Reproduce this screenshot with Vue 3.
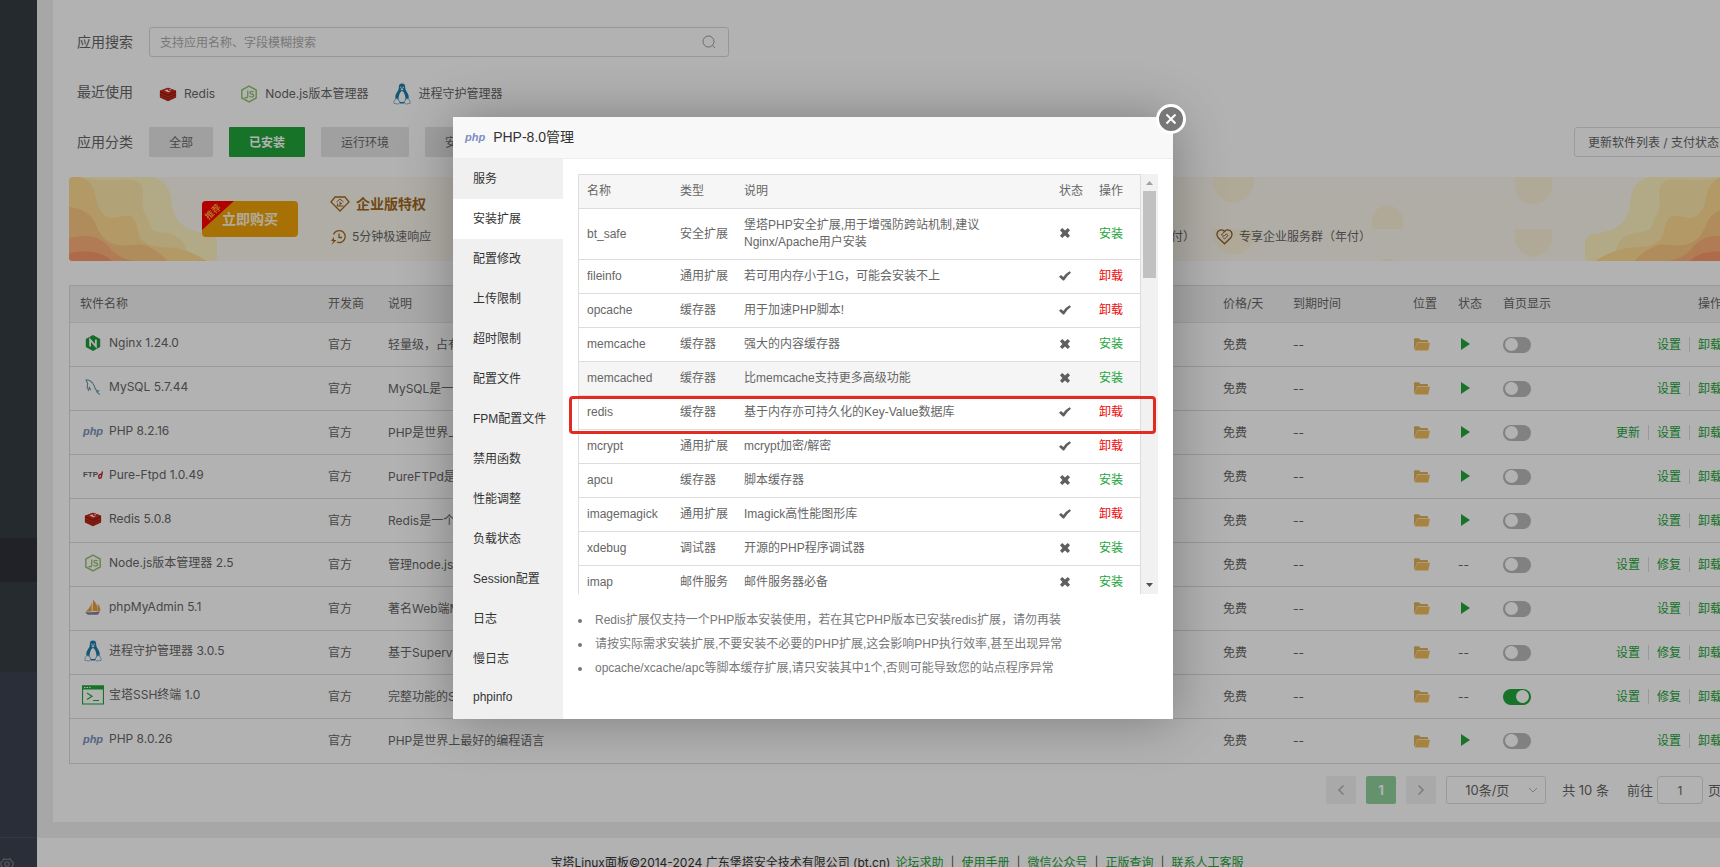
<script setup>
import { ref } from 'vue'

const recent = [
  { icon: 'redis', name: 'Redis' },
  { icon: 'node', name: 'Node.js版本管理器' },
  { icon: 'linux', name: '进程守护管理器' },
]
const categories = ['全部', '已安装', '运行环境', '安全应用']
const activeCategory = ref('已安装')
const keyword = ref('')
const pageNo = ref('1')

const software = ref([
  { icon: 'nginx', name: 'Nginx 1.24.0', desc: '轻量级，占有内存少，并发能力强', run: true, home: false, ops: ['设置', '卸载'] },
  { icon: 'mysql', name: 'MySQL 5.7.44', desc: 'MySQL是一种关系数据库管理系统', run: true, home: false, ops: ['设置', '卸载'] },
  { icon: 'php', name: 'PHP 8.2.16', desc: 'PHP是世界上最好的编程语言', run: true, home: false, ops: ['更新', '设置', '卸载'] },
  { icon: 'ftp', name: 'Pure-Ftpd 1.0.49', desc: 'PureFTPd是一款专注于程序健壮的软件', run: true, home: false, ops: ['设置', '卸载'] },
  { icon: 'redis', name: 'Redis 5.0.8', desc: 'Redis是一个高性能的数据库', run: true, home: false, ops: ['设置', '卸载'] },
  { icon: 'node', name: 'Node.js版本管理器 2.5', desc: '管理node.js版本', run: false, home: false, ops: ['设置', '修复', '卸载'] },
  { icon: 'pma', name: 'phpMyAdmin 5.1', desc: '著名Web端MySQL管理工具', run: true, home: false, ops: ['设置', '卸载'] },
  { icon: 'linux', name: '进程守护管理器 3.0.5', desc: '基于Supervisor的进程管理', run: false, home: false, ops: ['设置', '修复', '卸载'] },
  { icon: 'ssh', name: '宝塔SSH终端 1.0', desc: '完整功能的SSH客户端', run: false, home: true, ops: ['设置', '修复', '卸载'] },
  { icon: 'php', name: 'PHP 8.0.26', desc: 'PHP是世界上最好的编程语言', run: true, home: false, ops: ['设置', '卸载'] },
])

const tabs = ['服务', '安装扩展', '配置修改', '上传限制', '超时限制', '配置文件', 'FPM配置文件', '禁用函数', '性能调整', '负载状态', 'Session配置', '日志', '慢日志', 'phpinfo']
const activeTab = ref('安装扩展')

const extensions = [
  { name: 'bt_safe', type: '安全扩展', desc: '堡塔PHP安全扩展,用于增强防跨站机制,建议Nginx/Apache用户安装', on: false },
  { name: 'fileinfo', type: '通用扩展', desc: '若可用内存小于1G，可能会安装不上', on: true },
  { name: 'opcache', type: '缓存器', desc: '用于加速PHP脚本!', on: true },
  { name: 'memcache', type: '缓存器', desc: '强大的内容缓存器', on: false },
  { name: 'memcached', type: '缓存器', desc: '比memcache支持更多高级功能', on: false, hover: true },
  { name: 'redis', type: '缓存器', desc: '基于内存亦可持久化的Key-Value数据库', on: true },
  { name: 'mcrypt', type: '通用扩展', desc: 'mcrypt加密/解密', on: true },
  { name: 'apcu', type: '缓存器', desc: '脚本缓存器', on: false },
  { name: 'imagemagick', type: '通用扩展', desc: 'Imagick高性能图形库', on: true },
  { name: 'xdebug', type: '调试器', desc: '开源的PHP程序调试器', on: false },
  { name: 'imap', type: '邮件服务', desc: '邮件服务器必备', on: false },
]
const notes = [
  'Redis扩展仅支持一个PHP版本安装使用，若在其它PHP版本已安装redis扩展，请勿再装',
  '请按实际需求安装扩展,不要安装不必要的PHP扩展,这会影响PHP执行效率,甚至出现异常',
  'opcache/xcache/apc等脚本缓存扩展,请只安装其中1个,否则可能导致您的站点程序异常',
]
const footLinks = ['论坛求助', '使用手册', '微信公众号', '正版查询', '联系人工客服']
</script>

<template>
  <div class="app">
    <svg class="defs" aria-hidden="true">
      <symbol id="i-redis" viewBox="0 0 20 20">
        <path d="M1 6.5 10 3l9 3.5v7.5L10 18 1 14z" fill="#a41e11" />
        <path d="M1 6.5 10 3l9 3.5-9 4z" fill="#c92a20" />
        <path d="M1 9.2l9 4 9-4M1 12l9 4 9-4" fill="none" stroke="#cc3a30" />
        <path d="M6 5.7l3.5-.8 1 1.8 2.6.2-2.8 1.2zM11 4.4l3 1-1.8.8z" fill="#fff" />
      </symbol>
      <symbol id="i-node" viewBox="0 0 20 20">
        <path d="M10 1.2 18 5.6v8.8L10 18.8 2 14.4V5.6z" fill="none" stroke="#96c272" stroke-width="1.6" />
        <path d="M8.6 6v6.4q0 1.8-1.6 1.8-1.4 0-1.8-1M15 8q-.6-1-2.2-1-1.8 0-1.8 1.5 0 1.2 2 1.5 2.2.3 2.2 1.8 0 1.6-2.2 1.6-1.8 0-2.4-1.2" fill="none" stroke="#96c272" stroke-width="1.5" />
      </symbol>
      <symbol id="i-linux" viewBox="0 0 20 24">
        <path d="M6.500 5q-.4-4.800 3.500-4.800T13.500 5q.1 3 2.400 5.500Q19 15 16 20l-4 2.500H8L4 20Q1 15 4.100 10.500 6.500 8 6.500 5z" fill="#1c7dab" />
        <path d="M10 8.500q-2 1.500-3 4-1.600 5 0 7.500 3 2 6 0 1.600-2.500 0-7.500Q12 10 10 8.500z" fill="#fff" />
        <path d="M8.200 6.500 10 5.600l1.800.9L10 8z" fill="#fff" />
        <circle cx="8.700" cy="4.500" r=".7" fill="#fff" /><circle cx="11.300" cy="4.500" r=".7" fill="#fff" />
        <path d="M4.500 17q2 1.500 3.200 4-.8 2.500-3 2.200-1.500-.8-3.700-.8-.5-1 .3-2-.3-1.500 1-2 .6-1.200 2.200-1.400zM15.500 17q-2 1.500-3.200 4 .8 2.500 3 2.200 1.500-.8 3.700-.8.500-1-.3-2 .3-1.500-1-2-.6-1.200-2.200-1.400z" fill="#fff" stroke="#5f9ab5" stroke-width=".8" />
      </symbol>
      <symbol id="i-nginx" viewBox="0 0 20 20">
        <path d="M10 1l8 4.500v9L10 19l-8-4.500v-9z" fill="#1f9a3c" />
        <path d="M6.800 14V6.300l6.400 7.400V6" fill="none" stroke="#fff" stroke-width="2" />
      </symbol>
      <symbol id="i-mysql" viewBox="0 0 20 20">
        <path d="M2 2q4-.5 7.500 3.500 2.500 3.500 3 6.500.8 2 3.500 2.500l-1.800.8q1.500 1.400 3.300 3.200M2 2l2 3.500q0 3-.5 5L5 13.500l1-3 1.500 3" fill="none" stroke="#6b97a6" stroke-width="1.200" />
      </symbol>
      <symbol id="i-pma" viewBox="0 0 20 20">
        <path d="M8.500 2q.8 7-6.500 13h6.500zM10 2q5.500 5 5 12.500H9.500zM15 6.500q3.500 3 3 8h-2.500z" fill="#e8a03c" />
        <path d="M1.500 15.500q8 1.200 16-.8-.6 3.500-3 3.800H4.500q-2-.8-3-3z" fill="#8481a0" />
      </symbol>
      <symbol id="i-ssh" viewBox="0 0 22 20">
        <path d="M.5 1h21v18H.5z" fill="none" stroke="#20a53a" stroke-width="1.200" />
        <path d="M0 .5h22v4H0z" fill="#20a53a" />
        <path d="M2 2.500h1.500M4.500 2.500H6M7 2.500h1.500" stroke="#fff" stroke-width="1" />
        <path d="M5 8l5 3.300-5 3.300M11 15.500h6" fill="none" stroke="#20a53a" stroke-width="1.200" />
      </symbol>
      <symbol id="i-folder" viewBox="0 0 16 13">
        <path d="M0 1q0-.8.800-.8h4.200L6.500 2H13q1 0 1 1v1.200H3L.8 11.500Q0 11 0 10.500z" fill="#dfb25c" />
        <path d="M3 4.800H16l-1.800 7.700H.8z" fill="#f0bc5b" />
      </symbol>
      <symbol id="i-check" viewBox="0 0 12 10">
        <path d="M0 5.800 2 4l2.300 1.900Q6.800 2.300 10.600.2l1.400 1.600Q8.200 4.500 5.300 9.300q-.8.600-1.600 0z" fill="#5f5f5f" />
      </symbol>
      <symbol id="i-cross" viewBox="0 0 10 10">
        <path d="M2.200 0 5 2.400 7.800 0 10 2.200 7.600 5 10 7.800 7.800 10 5 7.600 2.200 10 0 7.800 2.400 5 0 2.200z" fill="#5f5f5f" />
      </symbol>
      <symbol id="i-waves" viewBox="0 0 148 84">
        <path d="M0 0h81q15 1 20 16c3 10 0 16 8 27 8 12 22 12 32 14q7 3 7 8v15q0 4-4 4H0z" fill="#fff2c0" />
        <path d="M0 0h11c20 5 40 2 53 3q10 2 10 12c0 10-2 16 3 24 6 12 4 15 14 16 12 1 16 3 23 10q5 8 3 19H0z" fill="#ffe9ab" />
        <path d="M0 0h11q13 4 15 17c2 12 6 22 16 24 12-1 20-6 24 3 4 6 1 14 8 20 10 8 20 5 32 7 14 3 20 6 32 13H0z" fill="#ffdc92" />
        <path d="M0 30q18 2 25 14c5 10 8 20 20 23 16 4 24-3 35 3q10 4 18 14H0z" fill="#fdc784" />
        <path d="M0 61q18-4 28 0 10 5 14 12 8 8 22 11H0z" fill="#fdb07a" />
        <path d="M0 76q16-3 29 0 8 2 14 8H0z" fill="#f89a6c" />
      </symbol>
    </svg>

    <aside class="side">
      <div class="side-top"></div>
      <div class="side-current"></div>
      <div class="side-mid"></div>
      <div class="side-rest"></div>
      <div class="side-foot">
        <svg width="14" height="14" viewBox="0 0 16 16" fill="none" stroke="#73777f" stroke-width="1.500"><path d="M4.500 2 6 2.800h4L11.500 2 13 4.500l2 2v3l-2 2L11.500 14h-7L3 11.500l-2-2v-3l2-2z" /><circle cx="8" cy="8" r="2.500" /></svg>
      </div>
    </aside>

    <div class="page">
      <main class="panel">
        <div class="frow">
          <label class="flabel" for="search">应用搜索</label>
          <div class="search">
            <input id="search" v-model="keyword" type="text" placeholder="支持应用名称、字段模糊搜索" />
            <svg width="14" height="14" viewBox="0 0 14 14" fill="none" stroke="#999"><circle cx="6.500" cy="6.500" r="5.500" /><path d="M10.500 10.500 13 13" /></svg>
          </div>
        </div>
        <div class="frow">
          <span class="flabel">最近使用</span>
          <div class="recent">
            <a v-for="r in recent" :key="r.name" href="#"><svg class="ricon" :class="r.icon"><use :href="'#i-' + r.icon" /></svg>{{ r.name }}</a>
          </div>
        </div>
        <div class="frow">
          <span class="flabel">应用分类</span>
          <div class="cats">
            <button v-for="c in categories" :key="c" type="button" :class="{ on: c === activeCategory }" @click="activeCategory = c">{{ c }}</button>
          </div>
          <button class="refresh" type="button">更新软件列表 / 支付状态</button>
        </div>

        <section class="banner">
          <svg class="dots" width="385" height="84" viewBox="0 0 385 84">
            <g fill="#fdf3da">
              <path d="M13 0h41v5a20.500 20.500 0 0 1-41 0z" />
              <path d="M172 52V44a15.500 15.500 0 0 1 31 0v8z" />
              <path d="M315 0h37v9a18.500 18.500 0 0 1-37 0z" />
              <path d="M13 52h41v5a20.500 20.500 0 0 1-41 0z" />
              <path d="M315 52h37v9a18.500 18.500 0 0 1-37 0z" />
              <path d="M180 84q8-5 15 0z" />
            </g>
          </svg>
          <svg class="waves left"><use href="#i-waves" /></svg>
          <svg class="waves right"><use href="#i-waves" /></svg>
          <button class="buy" type="button"><span class="ribbon"><i>推荐</i></span>立即购买</button>
          <div class="perks">
            <h3>
              <svg width="20" height="18" viewBox="0 0 20 18" fill="none" stroke="#a0681d" stroke-width="1.300"><path d="M5 2h10l4 5-9 9L1 7z" /><path d="M6.500 7 10 4l3.500 3M10 6.500V11M7.500 8.500V11M10 8.500h2M6.500 11h7" stroke-width="1" /></svg>
              企业版特权
            </h3>
            <ul>
              <li>
                <svg width="16" height="17" viewBox="0 0 16 17" fill="none" stroke="#a0681d" stroke-width="1.300"><path d="M3.500 5.500a6 6 0 1 1 3.500 7.700M9 4.500v4h3" /><path d="M4 8 1 12h2.500L1.500 16 6.500 11H4z" fill="#a0681d" stroke="none" /></svg>
                5分钟极速响应
              </li>
              <li class="mid">（年付）</li>
              <li>
                <svg width="17" height="16" viewBox="0 0 17 16" fill="none" stroke="#8a6030" stroke-width="1.300"><path d="M8.500 14.800 2 8.500Q-.5 4 3 1.500 6.500 0 8.500 2.500 10.500 0 14 1.500 17.500 4 15 8.500z" /><path d="M8.500 2.500 5.500 6q1 2 3 .5L10.500 5l1.500 1.500-3.500 3.500-1.500-1.500" stroke-width="1" /></svg>
                专享企业服务群（年付）
              </li>
            </ul>
          </div>
        </section>

        <table class="soft">
          <colgroup><col class="c-name" /><col class="c-dev" /><col /><col class="c-price" /><col class="c-date" /><col class="c-sm" /><col class="c-sm" /><col class="c-home" /><col class="c-ops" /></colgroup>
          <thead>
            <tr><th>软件名称</th><th>开发商</th><th>说明</th><th>价格/天</th><th>到期时间</th><th>位置</th><th>状态</th><th>首页显示</th><th class="ops">操作</th></tr>
          </thead>
          <tbody>
            <tr v-for="s in software" :key="s.name">
              <td>
                <div class="sname">
                  <span class="sbox">
                    <i v-if="s.icon === 'php'" class="logo-php">php</i>
                    <template v-else-if="s.icon === 'ftp'"><b class="logo-ftp">FTP</b><svg width="5" height="8" viewBox="0 0 5 8"><path d="M4.500.5 3 7M3.500 3.300Q.7 3 .7 5.500t2.300 1.300" fill="none" stroke="#c2242b" stroke-width="1.400" /></svg></template>
                    <svg v-else :class="['sicon', s.icon]"><use :href="'#i-' + s.icon" /></svg>
                  </span>{{ s.name }}
                </div>
              </td>
              <td>官方</td>
              <td class="desc">{{ s.desc }}</td>
              <td>免费</td>
              <td>--</td>
              <td><svg class="folder"><use href="#i-folder" /></svg></td>
              <td><svg v-if="s.run" class="play" viewBox="0 0 9 12"><path d="M0 0l9 6-9 6z" fill="#20a53a" /></svg><template v-else>--</template></td>
              <td><input v-model="s.home" class="switch" type="checkbox" role="switch" :aria-label="s.name" /></td>
              <td class="ops"><a v-for="o in s.ops" :key="o" href="#">{{ o }}</a></td>
            </tr>
          </tbody>
        </table>

        <nav class="pager">
          <button type="button" aria-label="prev"><svg width="8" height="12" viewBox="0 0 8 12"><path d="M6.500 1.500 2 6l4.500 4.500" /></svg></button>
          <button type="button" class="cur">1</button>
          <button type="button" aria-label="next"><svg width="8" height="12" viewBox="0 0 8 12"><path d="M1.500 1.500 6 6l-4.500 4.500" /></svg></button>
          <span class="size">
            <select aria-label="size"><option>10条/页</option></select>
            <svg width="10" height="6" viewBox="0 0 10 6"><path d="M1 1l4 4 4-4" /></svg>
          </span>
          <span class="total">共 10 条</span>
          <label for="goto">前往</label>
          <input id="goto" v-model="pageNo" type="text" />
          <span>页</span>
        </nav>
      </main>
      <footer class="foot">
        <span>宝塔Linux面板©2014-2024 广东堡塔安全技术有限公司 (bt.cn)</span>
        <a v-for="l in footLinks" :key="l" href="#">{{ l }}</a>
      </footer>
    </div>

    <div class="mask"></div>

    <section class="modal" role="dialog">
      <header class="mhead">
        <i class="logo-php">php</i>
        <h2>PHP-8.0管理</h2>
      </header>
      <button class="close" type="button" aria-label="close"><svg width="12" height="12" viewBox="0 0 12 12"><path d="M1.500 1.500l9 9M10.500 1.500l-9 9" stroke="#fff" stroke-width="2" /></svg></button>
      <div class="mbody">
        <nav class="tabs">
          <button v-for="t in tabs" :key="t" type="button" :class="{ on: t === activeTab }" @click="activeTab = t">{{ t }}</button>
        </nav>
        <div class="content">
          <div class="scroller">
            <div class="view">
              <table class="ext">
                <colgroup><col class="e-name" /><col class="e-type" /><col /><col class="e-state" /><col class="e-op" /></colgroup>
                <thead><tr><th>名称</th><th>类型</th><th>说明</th><th>状态</th><th>操作</th></tr></thead>
                <tbody>
                  <tr v-for="e in extensions" :key="e.name" :class="{ hover: e.hover }">
                    <td>{{ e.name }}</td>
                    <td>{{ e.type }}</td>
                    <td><span class="edesc">{{ e.desc }}</span></td>
                    <td><svg v-if="e.on" class="check"><use href="#i-check" /></svg><svg v-else class="cross"><use href="#i-cross" /></svg></td>
                    <td><a href="#" :class="{ del: e.on }">{{ e.on ? '卸载' : '安装' }}</a></td>
                  </tr>
                </tbody>
              </table>
            </div>
            <div class="bar">
              <svg width="7" height="4" viewBox="0 0 7 4"><path d="M0 4 3.500 0 7 4z" fill="#a0a0a0" /></svg>
              <span class="thumb"></span>
              <svg class="down" width="7" height="4" viewBox="0 0 7 4"><path d="M0 0h7L3.500 4z" fill="#505050" /></svg>
            </div>
            <div class="mark"></div>
          </div>
          <ul class="notes">
            <li v-for="n in notes" :key="n">{{ n }}</li>
          </ul>
        </div>
      </div>
    </section>
  </div>
</template>

<style>
body {
  margin: 0;
}
</style>

<style scoped>
.app {
  position: relative;
  display: flex;
  height: 100vh;
  overflow: hidden;
  background: #f0f0f0;
  color: #666;
  font: 12px/20px Inter, "Noto Sans CJK SC", sans-serif;
}
.app *,
.app *::before,
.app *::after {
  box-sizing: border-box;
}
button,
input,
select {
  font-family: inherit;
  font-size: 12px;
  color: inherit;
  margin: 0;
}
a {
  color: inherit;
  text-decoration: none;
}
.defs {
  position: absolute;
  width: 0;
  height: 0;
}
.logo-php {
  color: #7a8fc0;
  font: italic bold 11px/20px "Liberation Sans", sans-serif;
}
.logo-ftp {
  color: #666;
  font: bold 8px/20px "Liberation Sans", sans-serif;
}

/* side menu */
.side {
  display: grid;
  flex: none;
  grid-template-rows: 538fr 44fr 90fr 165fr 30fr;
  width: 37px;
  background: #3d4351;
}
.side-top {
  background: #363d42;
}
.side-current {
  background: #2e3138;
}
.side-mid {
  background: #363e42;
}
.side-foot {
  min-height: 0;
  padding-top: 19px;
  border-top: 1px solid #4c515d;
  overflow: hidden;
}

/* page */
.page {
  flex: none;
  width: calc(100% + 8px);
}
.panel {
  margin: 0 16px;
  padding: 27px 16px 18px;
  background: #fff;
}
.frow {
  display: flex;
  align-items: center;
  height: 30px;
  margin-bottom: 20px;
  padding-left: 8px;
}
.flabel {
  width: 72px;
  font-size: 14px;
}
.search {
  display: flex;
  align-items: center;
  width: 580px;
  height: 30px;
  padding: 0 12px 0 10px;
  border: 1px solid #d8d8d8;
  border-radius: 3px;
}
.search input {
  flex: 1;
  padding: 0;
  border: 0;
  outline: 0;
  background: none;
}
.search input::placeholder {
  color: #acacac;
}
.recent {
  display: flex;
  gap: 25px;
  padding: 3px 0 0 10px;
}
.recent a {
  display: flex;
  align-items: center;
  gap: 7px;
}
.ricon {
  width: 18px;
  height: 18px;
}
.ricon.linux {
  height: 24px;
}
.cats {
  display: flex;
  gap: 16px;
}
.cats button {
  height: 30px;
  padding: 0 20px 2px;
  border: 0;
  border-radius: 1px;
  background: #e6e6e6;
}
.cats .on {
  background: #20a53a;
  color: #fff;
  font-weight: bold;
}
.refresh {
  height: 30px;
  margin-left: auto;
  padding: 0 13px 2px;
  border: 1px solid #dcdfe6;
  border-radius: 3px;
  background: #fff;
}

/* banner */
.banner {
  position: relative;
  display: flex;
  height: 84px;
  margin-bottom: 24px;
  border-radius: 4px;
  background: #fcf8ee;
  overflow: hidden;
}
.waves {
  position: absolute;
  top: 0;
  width: 148px;
  height: 84px;
}
.waves.left {
  left: 0;
}
.waves.right {
  right: 0;
  transform: scaleX(-1);
}
.dots {
  position: absolute;
  top: 0;
  right: 148px;
}
.buy {
  position: relative;
  width: 96px;
  height: 36px;
  margin: 24px 32px 0 133px;
  padding: 0 0 2px;
  border: 0;
  border-radius: 4px;
  background: #f0a20a;
  color: #fff4dc;
  font-size: 14px;
  font-weight: bold;
  overflow: hidden;
}
.ribbon {
  position: absolute;
  top: 0;
  left: 0;
  width: 32px;
  height: 29px;
  background: #f00;
  clip-path: polygon(0 0, 100% 0, 0 100%);
}
.ribbon i {
  position: absolute;
  top: 0;
  left: 0;
  width: 22px;
  color: #ffd34d;
  font: normal 9px/22px Inter, "Noto Sans CJK SC", sans-serif;
  transform: rotate(-43deg);
}
.perks {
  position: relative;
}
.perks h3 {
  display: flex;
  align-items: center;
  gap: 6px;
  margin: 17px 0 13px;
  color: #a0681d;
  font-size: 14px;
  line-height: 20px;
}
.perks ul {
  display: grid;
  grid-template-columns: 200px 1fr 155px;
  column-gap: 21px;
  width: 1041px;
  margin: 0;
  padding: 0;
  list-style: none;
}
.perks li {
  display: flex;
  align-items: center;
  gap: 6px;
  white-space: nowrap;
}
.perks .mid {
  justify-content: flex-end;
}

/* software table */
.soft {
  width: 100%;
  table-layout: fixed;
  border: 1px solid #dbdbdb;
  border-spacing: 0;
}
.soft th,
.soft td {
  padding: 0 10px;
  text-align: left;
  font-weight: normal;
  white-space: nowrap;
  overflow: hidden;
}
.soft th {
  height: 37px;
  background: #f3f3f3;
  border-bottom: 1px solid #e6e6ea;
}
.soft td {
  height: 44px;
  border-bottom: 1px solid #dbdbdb;
}
.soft tr:last-child td {
  border-bottom: 0;
}
.c-name {
  width: 248px;
}
.c-dev {
  width: 60px;
}
.c-price {
  width: 70px;
}
.c-date {
  width: 120px;
}
.c-sm {
  width: 45px;
}
.c-home {
  width: 90px;
}
.c-ops {
  width: 149px;
}
.soft .ops {
  text-align: right;
}
.ops a {
  color: #20a53a;
}
.ops a + a {
  margin-left: 8px;
  padding-left: 8px;
  border-left: 1px solid #dcdcdc;
}
.sname {
  display: flex;
  align-items: center;
  gap: 3px;
  padding-bottom: 4px;
}
.sbox {
  display: flex;
  align-items: center;
  justify-content: center;
  width: 26px;
}
.sicon {
  width: 18px;
  height: 18px;
}
.sicon.linux {
  height: 24px;
}
.sicon.ssh {
  width: 22px;
  height: 20px;
}
.folder {
  display: block;
  width: 16px;
  height: 13px;
  margin-left: 1px;
}
.play {
  display: block;
  width: 9px;
  height: 12px;
  margin: 0 0 2px 3px;
}
.switch {
  display: block;
  width: 28px;
  height: 16px;
  padding: 1px 2px;
  border-radius: 8px;
  background: #b9b9b9;
  appearance: none;
}
.switch::before {
  content: "";
  display: block;
  width: 13px;
  height: 13px;
  border-radius: 50%;
  background: #fff;
}
.switch:checked {
  background: #20a53a;
}
.switch:checked::before {
  margin-left: auto;
}

/* pagination */
.pager {
  display: flex;
  align-items: center;
  justify-content: flex-end;
  margin-top: 12px;
  padding-right: 12px;
  font-size: 13px;
}
.pager button {
  display: flex;
  align-items: center;
  justify-content: center;
  width: 30px;
  height: 28px;
  margin-right: 10px;
  padding: 0;
  border: 0;
  border-radius: 2px;
  background: #f2f2f2;
  font-size: 13px;
}
.pager .cur {
  background: #90d29d;
  color: #fff;
  font-weight: bold;
}
.pager svg {
  fill: none;
  stroke: #b0b0b8;
  stroke-width: 1.5;
}
.size {
  display: flex;
  align-items: center;
  width: 100px;
  height: 28px;
  padding-right: 7px;
  border: 1px solid #d9dbe4;
  border-radius: 3px;
}
.size select {
  flex: 1;
  padding: 0 0 0 18px;
  border: 0;
  background: none;
  font-size: 13px;
  appearance: none;
}
.size svg {
  stroke-width: 1;
}
.total {
  margin: 0 18px 0 16px;
}
.pager input {
  width: 46px;
  height: 28px;
  margin: 0 5px 0 4px;
  padding: 0;
  border: 1px solid #d9dbe4;
  border-radius: 4px;
  background: none;
  text-align: center;
}
.foot {
  margin-top: 16px;
  padding: 15px 8px 16px 0;
  background: #fff;
  color: #333;
  text-align: center;
}
.foot a {
  color: #20a53a;
}
.foot span {
  margin-right: 5px;
}
.foot a + a::before {
  content: "|";
  margin: 0 7px;
  color: #555;
}

/* dialog */
.mask {
  position: absolute;
  inset: 0;
  background: rgba(0, 0, 0, 0.3);
}
.modal {
  position: absolute;
  top: 117px;
  left: calc(50% - 407px);
  width: 720px;
  background: #fff;
  box-shadow: 1px 1px 50px rgba(0, 0, 0, 0.3);
  font-family: "Liberation Sans", "Noto Sans CJK SC", sans-serif;
}
.mhead {
  display: flex;
  align-items: center;
  gap: 8px;
  height: 42px;
  padding: 0 0 2px 12px;
  border-bottom: 1px solid #eee;
  background: #f8f8f8;
}
.mhead h2 {
  margin: 0;
  color: #333;
  font-size: 14px;
  font-weight: normal;
}
.close {
  position: absolute;
  top: -13px;
  right: -13px;
  display: flex;
  align-items: center;
  justify-content: center;
  width: 30px;
  height: 30px;
  padding: 0;
  border: 3px solid #fff;
  border-radius: 50%;
  background: #787878;
}
.mbody {
  display: flex;
}
.tabs {
  flex: none;
  width: 110px;
  background: #f0f0f0;
}
.tabs button {
  display: block;
  width: 100%;
  height: 40px;
  padding: 0 0 4px 20px;
  border: 0;
  background: none;
  color: #333;
  text-align: left;
}
.tabs .on {
  background: #fff;
}
.content {
  flex: 1;
  min-width: 0;
  padding: 15px;
}
.scroller {
  position: relative;
  display: flex;
  height: 420px;
}
.view {
  flex: 1;
  overflow: hidden;
}
.ext {
  width: 100%;
  table-layout: fixed;
  border: 1px solid #ddd;
  border-spacing: 0;
  line-height: 17px;
}
.ext th,
.ext td {
  padding: 8px;
  border-bottom: 1px solid #ddd;
  text-align: left;
  font-weight: normal;
}
.ext th {
  background: #f6f6f6;
}
.hover td {
  background: #f5f5f5;
}
.ext a {
  color: #20a53a;
}
.ext .del {
  color: #ee0a0a;
}
.e-name {
  width: 93px;
}
.e-type {
  width: 64px;
}
.e-state {
  width: 40px;
}
.e-op {
  width: 49px;
}
.edesc {
  display: block;
  max-width: 240px;
}
.check,
.cross {
  display: block;
  width: 12px;
  height: 10px;
  margin-bottom: 2px;
}
.cross {
  width: 10px;
  margin-left: 1px;
}
.bar {
  display: flex;
  flex-direction: column;
  align-items: center;
  width: 17px;
  padding: 7px 0;
  background: #f1f1f1;
}
.thumb {
  width: 13px;
  height: 87px;
  margin-top: 6px;
  background: #c1c1c1;
}
.down {
  margin-top: auto;
}
.mark {
  position: absolute;
  top: 222px;
  right: 2px;
  left: -9px;
  height: 38px;
  border: 3px solid #e22c22;
  border-radius: 4px;
}
.notes {
  margin: 14px 0 0;
  padding-left: 14px;
  color: #777;
  line-height: 24px;
}
.notes li {
  padding-left: 3px;
}
</style>
